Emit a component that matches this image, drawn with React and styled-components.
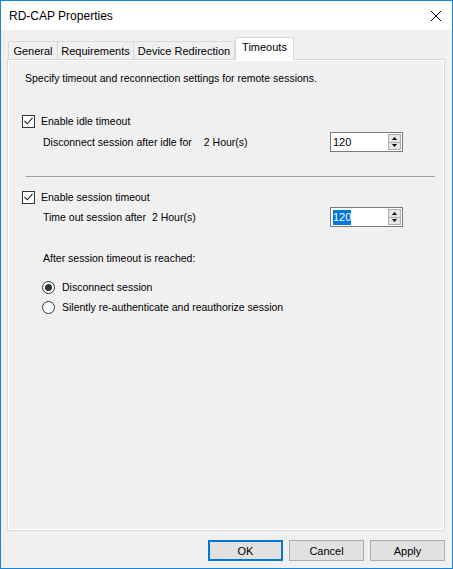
import styled, { createGlobalStyle } from "styled-components";

const GlobalStyle = createGlobalStyle`
  html, body {
    margin: 0;
    padding: 0;
    background: #f0f0f0;
  }
  * {
    box-sizing: border-box;
  }
`;

const Window = styled.div`
  width: 453px;
  height: 569px;
  border: 1px solid #1883d7;
  background: #f0f0f0;
  font-family: "Liberation Sans", Arial, sans-serif;
  font-size: 10.5px;
  color: #000;
  display: flex;
  flex-direction: column;
`;

const TitleBar = styled.div`
  height: 29px;
  background: #fff;
  display: flex;
  align-items: center;
  justify-content: space-between;
  padding: 0 10px 0 8px;
  font-size: 12px;
`;

const CloseIcon = styled.svg`
  width: 12px;
  height: 12px;
`;

const Body = styled.div`
  flex: 1;
  display: flex;
  flex-direction: column;
  padding: 7px 7px 0 6px;
`;

const TabStrip = styled.div`
  display: flex;
  align-items: flex-end;
  height: 22px;
  padding-left: 1px;
  position: relative;
  z-index: 1;
  font-size: 11px;
`;

const Tab = styled.div`
  width: ${(p) => p.$w}px;
  height: ${(p) => (p.$active ? "23px" : "18px")};
  background: ${(p) => (p.$active ? "#fff" : "#f0f0f0")};
  border: 1px solid #d9d9d9;
  border-bottom: none;
  border-left-width: ${(p) => (p.$first || p.$active ? "1px" : "0")};
  display: flex;
  align-items: center;
  justify-content: center;
  margin-bottom: ${(p) => (p.$active ? "-1px" : "0")};
  padding-bottom: ${(p) => (p.$active ? "4px" : "0")};
`;

const Panel = styled.div`
  height: 472px;
  border: 1px solid #d9d9d9;
  box-shadow: inset 0 0 0 1px #fff;
  background: #f0f0f0;
  padding: 10px 41px 0 14px;
  display: flex;
  flex-direction: column;
`;

const Intro = styled.div`
  line-height: 16px;
  padding-left: 3px;
`;

const CheckRow = styled.label`
  display: flex;
  align-items: center;
  gap: 6px;
  line-height: 16px;
  margin-top: ${(p) => p.$top}px;
`;

const Box = styled.span`
  width: 13px;
  height: 13px;
  border: 1px solid #333;
  background: #fff;
  display: flex;
  align-items: center;
  justify-content: center;
`;

const ValueRow = styled.div`
  display: flex;
  align-items: center;
  justify-content: space-between;
  padding-left: 21px;
  margin-top: ${(p) => p.$top}px;
`;

const Gap = styled.span`
  display: inline-block;
  width: ${(p) => p.$w}px;
`;

const Spinner = styled.div`
  width: 73px;
  height: 20px;
  background: #fff;
  border: 1px solid #7a7a7a;
  display: flex;
  align-items: center;
  justify-content: space-between;
  padding: 1px 1px 1px 2px;
  font-size: 11px;
`;

const SpinValue = styled.span`
  line-height: 15px;
  background: ${(p) => (p.$selected ? "#0078d7" : "transparent")};
  color: ${(p) => (p.$selected ? "#fff" : "#000")};
`;

const SpinButtons = styled.div`
  width: 13px;
  height: 16px;
  display: flex;
  flex-direction: column;
  border: 1px solid #adadad;
  background: #e5e5e5;
`;

const SpinHalf = styled.div`
  flex: 1;
  display: flex;
  align-items: center;
  justify-content: center;
  & + & {
    border-top: 1px solid #adadad;
  }
`;

const Separator = styled.div`
  height: 1px;
  background: #a0a0a0;
  margin: 24px -32px 0 4px;
`;

const Note = styled.div`
  line-height: 16px;
  padding-left: 21px;
  margin-top: 23px;
`;

const RadioRow = styled.label`
  display: flex;
  align-items: center;
  gap: 7px;
  line-height: 16px;
  padding-left: 20px;
  margin-top: ${(p) => p.$top}px;
`;

const Circle = styled.span`
  width: 13px;
  height: 13px;
  border-radius: 50%;
  border: 1px solid #333;
  background: #fff;
  display: flex;
  align-items: center;
  justify-content: center;
  &::after {
    content: "";
    width: 7px;
    height: 7px;
    border-radius: 50%;
    background: ${(p) => (p.$on ? "#333" : "transparent")};
  }
`;

const Footer = styled.div`
  display: flex;
  justify-content: flex-end;
  gap: 6px;
  padding-top: 9px;
`;

const Button = styled.button`
  width: 75px;
  height: 21px;
  font-family: inherit;
  font-size: 11px;
  background: #e1e1e1;
  border: ${(p) => (p.$primary ? "2px solid #0078d7" : "1px solid #adadad")};
  color: #000;
  padding: 0;
`;

const Check = () => (
  <Box>
    <svg width="9" height="8" viewBox="0 0 9 8">
      <path d="M0.5 4 L3.3 6.8 L8.5 0.8" fill="none" stroke="#222" strokeWidth="1.1" />
    </svg>
  </Box>
);

const Spin = ({ value, selected }) => (
  <Spinner>
    <SpinValue $selected={selected}>{value}</SpinValue>
    <SpinButtons>
      <SpinHalf>
        <svg width="5" height="3" viewBox="0 0 5 3">
          <path d="M2.5 0 L5 3 L0 3 Z" fill="#000" />
        </svg>
      </SpinHalf>
      <SpinHalf>
        <svg width="5" height="3" viewBox="0 0 5 3">
          <path d="M0 0 L5 0 L2.5 3 Z" fill="#000" />
        </svg>
      </SpinHalf>
    </SpinButtons>
  </Spinner>
);

export default function App() {
  return (
    <>
      <GlobalStyle />
      <Window>
        <TitleBar>
          <span>RD-CAP Properties</span>
          <CloseIcon viewBox="0 0 12 12">
            <path d="M1 1 L11 11 M11 1 L1 11" stroke="#000" strokeWidth="1" />
          </CloseIcon>
        </TitleBar>
        <Body>
          <TabStrip>
            <Tab $first $w={50}>General</Tab>
            <Tab $w={76}>Requirements</Tab>
            <Tab $w={101}>Device Redirection</Tab>
            <Tab $active $w={59}>Timeouts</Tab>
          </TabStrip>
          <Panel>
            <Intro>Specify timeout and reconnection settings for remote sessions.</Intro>
            <CheckRow $top={27}>
              <Check />
              Enable idle timeout
            </CheckRow>
            <ValueRow $top={3}>
              <span>
                Disconnect session after idle for<Gap $w={12} />2 Hour(s)
              </span>
              <Spin value="120" />
            </ValueRow>
            <Separator />
            <CheckRow $top={12}>
              <Check />
              Enable session timeout
            </CheckRow>
            <ValueRow $top={2}>
              <span>
                Time out session after<Gap $w={6} />2 Hour(s)
              </span>
              <Spin value="120" selected />
            </ValueRow>
            <Note>After session timeout is reached:</Note>
            <RadioRow $top={13}>
              <Circle $on />
              Disconnect session
            </RadioRow>
            <RadioRow $top={4}>
              <Circle />
              Silently re-authenticate and reauthorize session
            </RadioRow>
          </Panel>
          <Footer>
            <Button $primary>OK</Button>
            <Button>Cancel</Button>
            <Button>Apply</Button>
          </Footer>
        </Body>
      </Window>
    </>
  );
}
